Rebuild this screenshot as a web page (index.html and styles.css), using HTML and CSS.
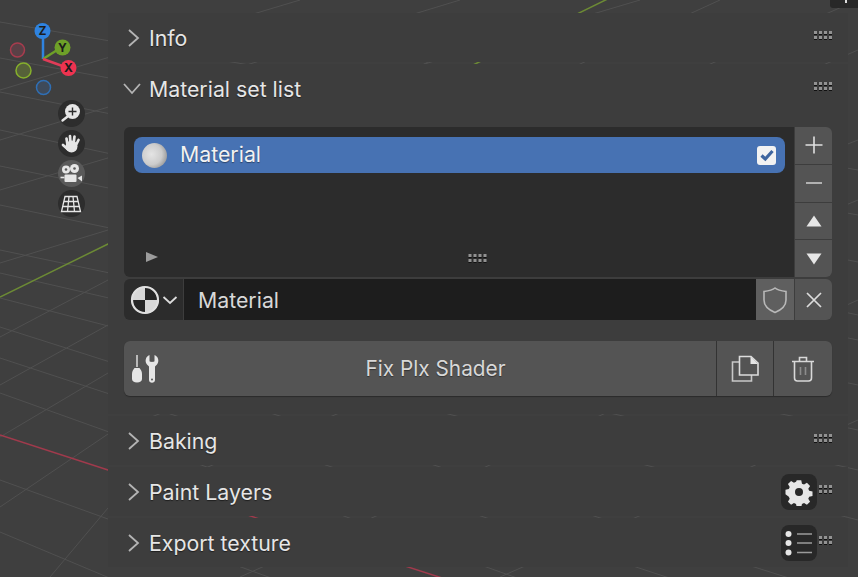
FILE: index.html
```html
<!DOCTYPE html>
<html lang="en">
<head>
    <meta charset="UTF-8">
    <title>Material set list</title>
    <link rel="stylesheet" href="styles.css">
</head>
<body>
    <!-- 3D viewport floor -->
    <svg class="floor" width="858" height="577" viewBox="0 0 858 577">
        <g class="grid">
            <path d="M0 22L858 170M0 58L858 215M0 92L858 262M0 130L858 315M0 166L858 340M0 205L858 385M0 250L858 430M0 273L858 470M0 298L858 520M0 327L858 600M0 358L858 640M0 393L858 700M0 480L858 790M0 532L400 700"/>
            <path d="M0 90L300 0M0 140L460 0M0 190L640 0M0 263L108 230L470 40M0 337L108 280L720 0M0 385L108 325L858 0M0 437L108 373L858 50M0 507L108 434L858 140M50 577L108 508L858 200M240 577L858 300M500 577L858 420"/>
        </g>
        <path class="axis-y" d="M0 297L108 244L630 -12"/>
        <path class="axis-x" d="M0 435L108 470L470 587"/>
    </svg>

    <!-- Orientation gizmo -->
    <svg class="gizmo" width="90" height="100" viewBox="0 0 90 100">
        <circle cx="17.500" cy="50" r="7" fill="#5a4046" stroke="#a83c4e" stroke-width="1.500"/>
        <circle cx="23.500" cy="70.500" r="7.500" fill="#566239" stroke="#86b02c" stroke-width="1.500"/>
        <circle cx="43.500" cy="87.500" r="7" fill="#3e4a5a" stroke="#2f6fb5" stroke-width="1.500"/>
        <path d="M43 59V31" stroke="#2f83e0" stroke-width="2.500"/>
        <path d="M43 59L62 47" stroke="#6ea028" stroke-width="2.500"/>
        <path d="M43 59L68 68" stroke="#e03c58" stroke-width="2.500"/>
        <circle cx="42.500" cy="31" r="8" fill="#2f83e0"/>
        <circle cx="62.500" cy="47.500" r="8" fill="#6ea028"/>
        <circle cx="68.500" cy="68" r="8" fill="#ee3350"/>
        <text x="42.500" y="35" class="gizmo-label">Z</text>
        <text x="62.500" y="51.500" class="gizmo-label">Y</text>
        <text x="68.500" y="72" class="gizmo-label">X</text>
    </svg>

    <!-- Viewport tools -->
    <div class="tools">
        <div class="tool">
            <svg width="24" height="24" viewBox="0 0 24 24"><circle cx="13.500" cy="10.500" r="7.500" fill="#e6e6e6"/><path d="M13.500 6.500v8M9.500 10.500h8" stroke="#2b2b2b" stroke-width="1.400"/><path d="M8 16l-4.500 3.500" stroke="#e6e6e6" stroke-width="2.400" stroke-linecap="round"/></svg>
        </div>
        <div class="tool">
            <svg width="24" height="24" viewBox="0 0 24 24">
                <circle cx="12.500" cy="15.500" r="6" fill="#e6e6e6"/>
                <path d="M8.500 14L7.500 7.500M11.500 13L11 5M14.500 13L15.500 5.500M17 14L19.500 9M8.500 18L4 14" stroke="#e6e6e6" stroke-width="2.700" stroke-linecap="round" fill="none"/>
            </svg>
        </div>
        <div class="tool tool-on">
            <svg width="24" height="24" viewBox="0 0 24 24"><circle cx="7" cy="7.500" r="4" fill="#e6e6e6"/><circle cx="15.500" cy="6.500" r="4.500" fill="#e6e6e6"/><circle cx="7" cy="7.500" r="1.300" fill="#5a5a5a"/><circle cx="15.500" cy="6.500" r="1.300" fill="#5a5a5a"/><rect x="5.500" y="12.500" width="12" height="7.500" rx="1" fill="#e6e6e6"/><path d="M18.500 16l4.500-2.500v6z" fill="#e6e6e6"/><path d="M1.500 15.500H5.500" stroke="#e6e6e6" stroke-width="1.600"/></svg>
        </div>
        <div class="tool">
            <svg width="24" height="24" viewBox="0 0 24 24"><path d="M6 4.500H18L21.500 19.500H2.500ZM10 4.500L8.500 19.500M14 4.500L15.500 19.500M4.700 9.500H19.300M3.600 14.500H20.400" fill="none" stroke="#e6e6e6" stroke-width="1.300"/></svg>
        </div>
    </div>

    <svg class="defs" width="0" height="0">
        <symbol id="grip4" viewBox="0 0 18 9"><path d="M0 0h3v3H0zM5 0h3v3H5zM10 0h3v3h-3zM15 0h3v3h-3zM0 5h3v3H0zM5 5h3v3H5zM10 5h3v3h-3zM15 5h3v3h-3z" fill="#929292"/><path d="M0 3h3v1H0zM5 3h3v1H5zM10 3h3v1h-3zM15 3h3v1h-3zM0 8h3v1H0zM5 8h3v1H5zM10 8h3v1h-3zM15 8h3v1h-3z" fill="#111"/></symbol>
        <symbol id="grip3" viewBox="0 0 13 9"><path d="M0 0h3v3H0zM5 0h3v3H5zM10 0h3v3h-3zM0 5h3v3H0zM5 5h3v3H5zM10 5h3v3h-3z" fill="#929292"/><path d="M0 3h3v1H0zM5 3h3v1H5zM10 3h3v1h-3zM0 8h3v1H0zM5 8h3v1H5zM10 8h3v1h-3z" fill="#111"/></symbol>
        <symbol id="closed" viewBox="0 0 14 20"><path d="M2 2l9 8-9 8" fill="none" stroke="#b4b4b4" stroke-width="1.800"/></symbol>
        <symbol id="open" viewBox="0 0 20 14"><path d="M2 2l8 9 8-9" fill="none" stroke="#b4b4b4" stroke-width="1.800"/></symbol>
    </svg>

    <div class="corner"><span></span></div>

    <!-- Sidebar -->
    <aside class="sidebar">
        <section class="panel">
            <div class="panel-head">
                <svg class="chevron" width="14" height="20"><use href="#closed"/></svg>
                <span>Info</span>
                <svg class="grip" width="18" height="9"><use href="#grip4"/></svg>
            </div>
        </section>

        <section class="panel">
            <div class="panel-head">
                <svg class="chevron chevron-open" width="20" height="14"><use href="#open"/></svg>
                <span>Material set list</span>
                <svg class="grip" width="18" height="9"><use href="#grip4"/></svg>
            </div>

            <div class="panel-body">
                <div class="list-wrap">
                    <div class="list-box">
                        <div class="list-item">
                            <span class="sphere"></span>
                            <span class="item-name">Material</span>
                            <span class="check">
                                <svg width="18" height="18" viewBox="0 0 18 18"><path d="M3.500 9.500l3.800 3.500L14.500 5" fill="none" stroke="#3e659f" stroke-width="3.200"/></svg>
                            </span>
                        </div>
                        <div class="list-foot">
                            <span class="arrow-right"></span>
                            <svg class="list-grip" width="21" height="9"><use href="#grip4"/></svg>
                        </div>
                    </div>
                    <div class="list-side">
                        <div class="side-btn">
                            <svg width="20" height="20" viewBox="0 0 20 20"><path d="M10 1.500v17M1.500 10h17" stroke="#e0e0e0" stroke-width="1.600"/></svg>
                        </div>
                        <div class="side-btn">
                            <svg width="20" height="20" viewBox="0 0 20 20"><path d="M2 10h16" stroke="#d0d0d0" stroke-width="1.600"/></svg>
                        </div>
                        <div class="side-btn">
                            <svg width="18" height="14" viewBox="0 0 18 14"><path d="M9 1.500L16.500 12.500H1.500Z" fill="#e6e6e6"/></svg>
                        </div>
                        <div class="side-btn">
                            <svg width="18" height="14" viewBox="0 0 18 14"><path d="M9 12.500L16.500 1.500H1.500Z" fill="#e6e6e6"/></svg>
                        </div>
                    </div>
                </div>

                <div class="field-row">
                    <div class="mat-picker">
                        <svg width="30" height="30" viewBox="0 0 30 30">
                            <circle cx="15" cy="15" r="13.500" fill="#d8d8d8"/>
                            <path d="M15 1.500A13.500 13.500 0 0 1 28.500 15H15ZM15 15V28.500A13.500 13.500 0 0 1 1.500 15Z" fill="#262626"/>
                            <circle cx="15" cy="15" r="13" fill="none" stroke="#e0e0e0" stroke-width="2.200"/>
                        </svg>
                        <svg width="16" height="10" viewBox="0 0 16 10"><path d="M1.500 2l6.500 6 6.500-6" fill="none" stroke="#dcdcdc" stroke-width="1.800"/></svg>
                    </div>
                    <div class="mat-name">Material</div>
                    <div class="field-btn field-btn-light">
                        <svg width="26" height="28" viewBox="0 0 26 28"><path d="M13 2C10 4.500 6 5 2 5.500V14c0 6 5 10 11 12.500C19 24 24 20 24 14V5.500C20 5 16 4.500 13 2Z" fill="none" stroke="#b8b8b8" stroke-width="1.600"/></svg>
                    </div>
                    <div class="field-btn">
                        <svg width="18" height="18" viewBox="0 0 18 18"><path d="M2 2l14 14M16 2L2 16" stroke="#dcdcdc" stroke-width="1.700"/></svg>
                    </div>
                </div>

                <div class="fix-row">
                    <div class="fix-main">
                        <svg class="fix-icon" width="30" height="30" viewBox="0 0 30 30">
                            <path d="M5 1v12" stroke="#e6e6e6" stroke-width="1.400"/>
                            <path d="M2.500 14h5c1.500 2 2.500 3.500 2.500 6v5c0 2-2 3.500-5 3.500S0 27 0 25v-5c0-2.500 1-4 2.500-6z" fill="#e6e6e6"/>
                            <path d="M17.500 1c-4 1.500-5 6.500-2.500 9.500l2 2V26c0 3.500 6 3.500 6 0V12.500l2-2c2.500-3 1.500-8-2.500-9.500v6c0 1.200-5 1.200-5 0Z" fill="#e6e6e6"/>
                            <circle cx="20" cy="25.500" r="1" fill="#555"/>
                        </svg>
                        <span class="fix-label">Fix Plx Shader</span>
                    </div>
                    <div class="fix-btn">
                        <svg width="28" height="28" viewBox="0 0 28 28">
                            <path d="M8.500 7H1.500V26H20.500V20" fill="none" stroke="#c8c8c8" stroke-width="1.600"/>
                            <path d="M8.500 1.500H20L27 8V20H8.500Z" fill="none" stroke="#dcdcdc" stroke-width="1.600"/>
                            <path d="M19.500 1.500L27 9H19.500Z" fill="#e6e6e6"/>
                        </svg>
                    </div>
                    <div class="fix-btn fix-btn-last">
                        <svg width="24" height="28" viewBox="0 0 24 28">
                            <path d="M1 6.500H23M8.500 6V2.500H15.500V6" fill="none" stroke="#d8d8d8" stroke-width="1.600"/>
                            <path d="M3.500 7V23c0 2 1 3 3 3h11c2 0 3-1 3-3V7" fill="none" stroke="#d8d8d8" stroke-width="1.600"/>
                            <path d="M9.500 12v8M14.500 12v8" stroke="#8c8c8c" stroke-width="1.600"/>
                        </svg>
                    </div>
                </div>
            </div>
        </section>

        <section class="panel">
            <div class="panel-head">
                <svg class="chevron" width="14" height="20"><use href="#closed"/></svg>
                <span>Baking</span>
                <svg class="grip" width="18" height="9"><use href="#grip4"/></svg>
            </div>
        </section>

        <section class="panel">
            <div class="panel-head">
                <svg class="chevron" width="14" height="20"><use href="#closed"/></svg>
                <span>Paint Layers</span>
                <div class="head-icon">
                    <svg width="28" height="28" viewBox="0 0 28 28"><path d="M11.500 1h5l.8 3.700 2.300 1 3.200-2 3.500 3.500-2 3.200 1 2.300 3.700.8v5l-3.700.8-1 2.300 2 3.200-3.500 3.500-3.200-2-2.300 1-.8 3.700h-5l-.8-3.700-2.300-1-3.200 2-3.500-3.500 2-3.200-1-2.300L-1 16.500v-5l3.700-.8 1-2.300-2-3.200 3.500-3.500 3.200 2 2.300-1z" transform="translate(1.400 1.400) scale(.9)" fill="#e6e6e6"/><circle cx="14" cy="14" r="4" fill="#282828"/></svg>
                </div>
                <svg class="grip-short" width="13" height="9"><use href="#grip3"/></svg>
            </div>
        </section>

        <section class="panel">
            <div class="panel-head">
                <svg class="chevron" width="14" height="20"><use href="#closed"/></svg>
                <span>Export texture</span>
                <div class="head-icon">
                    <svg width="30" height="28" viewBox="0 0 30 28"><circle cx="4.500" cy="5" r="3" fill="#e6e6e6"/><circle cx="4.500" cy="14" r="3" fill="#e6e6e6"/><circle cx="4.500" cy="23.500" r="3" fill="#e6e6e6"/><path d="M13 5h15M13 14h15M13 23.500h15" stroke="#9a9a9a" stroke-width="1.600"/></svg>
                </div>
                <svg class="grip-short" width="13" height="9"><use href="#grip3"/></svg>
            </div>
        </section>
    </aside>
</body>
</html>
```

FILE: styles.css
```css
/* Page */
body {
    margin: 0;
    width: 858px;
    height: 577px;
    overflow: hidden;
    position: relative;
    background-color: #3f3f3f;
    font-family: Inter, "Noto Sans", sans-serif;
    color: #e6e6e6;
}

/* Viewport */
.floor {
    position: absolute;
    left: 0;
    top: 0;
}

.grid {
    fill: none;
    stroke: #505050;
    stroke-width: 1;
}

.axis-y {
    fill: none;
    stroke: #6c8a35;
    stroke-width: 1.500;
}

.axis-x {
    fill: none;
    stroke: #a03a4c;
    stroke-width: 1.500;
}

.gizmo {
    position: absolute;
    left: 0;
    top: 0;
}

.gizmo-label {
    font-size: 12px;
    font-weight: 700;
    text-anchor: middle;
    fill: #1c1c1c;
}

.defs {
    position: absolute;
}

.tools {
    position: absolute;
    left: 57.500px;
    top: 99.500px;
    display: flex;
    flex-direction: column;
    gap: 3.300px;
}

.tool {
    width: 27px;
    height: 27px;
    border-radius: 50%;
    background-color: #2d2d2d;
    display: flex;
    align-items: center;
    justify-content: center;
}

.tool-on {
    background-color: #5a5a5a;
}

.corner {
    position: absolute;
    right: 0;
    top: 0;
    width: 28px;
    height: 8px;
    background-color: #282828;
    border-radius: 0 0 0 3px;
}

.corner span {
    position: absolute;
    left: 15px;
    top: 0;
    width: 2px;
    height: 3px;
    background-color: #ddd;
}

/* Sidebar */
.sidebar {
    position: absolute;
    left: 108px;
    top: 13px;
    right: 10px;
    display: flex;
    flex-direction: column;
    gap: 2px;
}

.panel {
    background-color: #3d3d3d;
}

.panel-head {
    height: 49px;
    padding: 0 16px 0 19px;
    display: flex;
    align-items: center;
    font-size: 21.300px;
    text-shadow: 0 1px 1px rgba(0, 0, 0, 0.5);
}

.chevron {
    width: 14px;
    margin-right: 8px;
    flex-shrink: 0;
}

.chevron-open {
    width: 20px;
    margin-left: -5px;
    margin-right: 7px;
}

.grip {
    margin-left: auto;
    margin-bottom: 4px;
}

.grip-short {
    margin-left: 2px;
    margin-bottom: 4px;
}

.head-icon {
    margin-left: auto;
    width: 36px;
    height: 36px;
    border-radius: 8px;
    background-color: #282828;
    display: flex;
    align-items: center;
    justify-content: center;
}

/* Material list */
.panel-body {
    padding: 14px 16px 18px 16px;
}

.list-wrap {
    display: flex;
    height: 150px;
}

.list-box {
    flex: 1;
    background-color: #2c2c2c;
    border-radius: 6px 0 0 6px;
    padding: 10px 9px 0 10px;
    display: flex;
    flex-direction: column;
}

.list-item {
    height: 36px;
    border-radius: 8px;
    background-color: #4772b3;
    display: flex;
    align-items: center;
    padding: 0 9px 0 8px;
    font-size: 21.300px;
    color: #f2f2f2;
    text-shadow: 0 1px 1px rgba(0, 0, 0, 0.4);
}

.sphere {
    width: 25px;
    height: 25px;
    border-radius: 50%;
    background: radial-gradient(circle at 38% 45%, #e4e4e4 0, #cccccc 50%, #9a9a9a 78%, #4e4e4e 100%);
}

.item-name {
    margin-left: 13px;
    margin-bottom: 2px;
}

.check {
    margin-left: auto;
    width: 19px;
    height: 19px;
    border-radius: 3px;
    background-color: #f2f2f2;
    display: flex;
    align-items: center;
    justify-content: center;
}

.list-foot {
    flex: 1;
    position: relative;
}

.arrow-right {
    position: absolute;
    left: 12px;
    bottom: 15px;
    border-left: 12px solid #9c9c9c;
    border-top: 5px solid transparent;
    border-bottom: 5px solid transparent;
}

.list-grip {
    position: absolute;
    left: 333px;
    bottom: 14px;
}

.list-side {
    width: 37px;
    margin-left: 1px;
    display: flex;
    flex-direction: column;
    gap: 1px;
    border-radius: 0 6px 6px 0;
    overflow: hidden;
}

.side-btn {
    flex: 1;
    background-color: #545454;
    display: flex;
    align-items: center;
    justify-content: center;
}

/* Material name field */
.field-row {
    display: flex;
    height: 41px;
    margin-top: 2px;
    border-radius: 6px;
    overflow: hidden;
    gap: 1px;
    background-color: #3d3d3d;
}

.mat-picker {
    width: 59px;
    background-color: #2c2c2c;
    display: flex;
    align-items: center;
    justify-content: center;
    gap: 2px;
}

.mat-name {
    flex: 1;
    background-color: #1d1d1d;
    padding-left: 14px;
    margin-right: -1px;
    display: flex;
    align-items: center;
    font-size: 21.300px;
    color: #d8d8d8;
}

.field-btn {
    width: 37px;
    background-color: #545454;
    display: flex;
    align-items: center;
    justify-content: center;
}

.field-btn-light {
    width: 38px;
    background-color: #5f5f5f;
}

/* Fix shader row */
.fix-row {
    display: flex;
    height: 55px;
    margin-top: 21px;
    border-radius: 6px;
    overflow: hidden;
    gap: 1px;
    box-shadow: 0 1px 1px rgba(0, 0, 0, 0.3);
    background-color: #333;
}

.fix-main {
    flex: 1;
    background-color: #545454;
    display: flex;
    align-items: center;
    padding: 0 7px 0 8px;
}

.fix-icon {
    flex-shrink: 0;
}

.fix-label {
    flex: 1;
    text-align: center;
    font-size: 20.800px;
    color: #d8d8d8;
    text-shadow: 0 1px 1px rgba(0, 0, 0, 0.4);
}

.fix-btn {
    width: 56px;
    background-color: #545454;
    display: flex;
    align-items: center;
    justify-content: center;
}

.fix-btn-last {
    width: 58px;
}
```
